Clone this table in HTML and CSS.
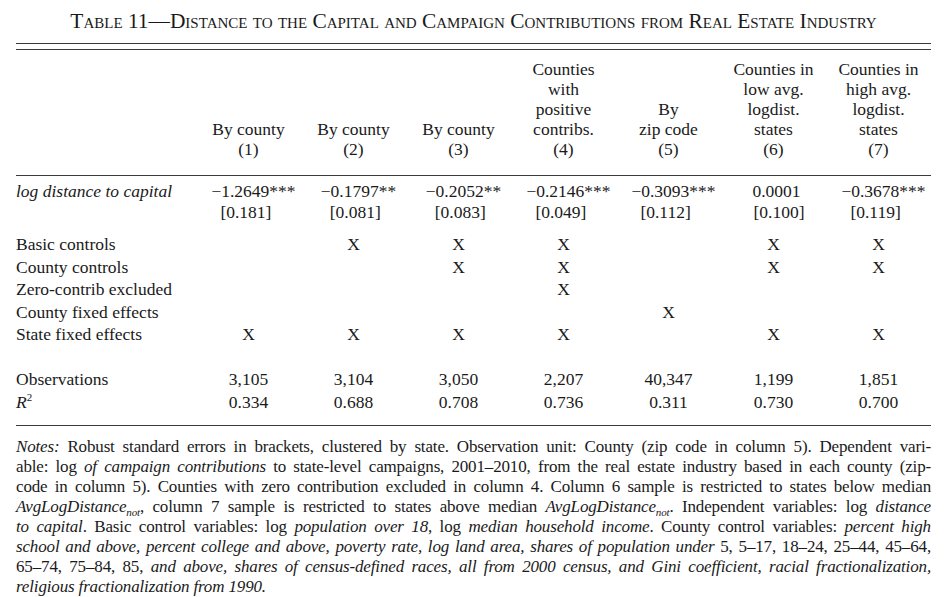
FILE: index.html
```html
<!DOCTYPE html>
<html lang="en">
<head>
<meta charset="utf-8">
<title>Table 11</title>
<link rel="stylesheet" href="styles.css">
</head>
<body>
<div class="page">
  <h1 class="title">Table 11—Distance to the Capital and Campaign Contributions from Real Estate Industry</h1>
  <div class="double-rule"></div>
  <table class="reg">
    <colgroup>
      <col class="col-label">
      <col class="col-data"><col class="col-data"><col class="col-data"><col class="col-data"><col class="col-data"><col class="col-data"><col class="col-data">
    </colgroup>
    <thead>
      <tr>
        <th class="h-label"></th>
        <th>By county<br>(1)</th>
        <th>By county<br>(2)</th>
        <th>By county<br>(3)</th>
        <th>Counties<br>with<br>positive<br>contribs.<br>(4)</th>
        <th>By<br>zip code<br>(5)</th>
        <th>Counties in<br>low avg.<br>logdist.<br>states<br>(6)</th>
        <th>Counties in<br>high avg.<br>logdist.<br>states<br>(7)</th>
      </tr>
    </thead>
    <tbody>
      <tr class="coef-row">
        <td class="label"><i>log distance to capital</i></td>
        <td><span class="stack"><span class="cf">−1.2649***</span><span class="se">[0.181]</span></span></td>
        <td><span class="stack"><span class="cf">−0.1797**</span><span class="se">[0.081]</span></span></td>
        <td><span class="stack"><span class="cf">−0.2052**</span><span class="se">[0.083]</span></span></td>
        <td><span class="stack"><span class="cf">−0.2146***</span><span class="se">[0.049]</span></span></td>
        <td><span class="stack"><span class="cf">−0.3093***</span><span class="se">[0.112]</span></span></td>
        <td><span class="stack"><span class="cf">0.0001</span><span class="se se-flat">[0.100]</span></span></td>
        <td><span class="stack"><span class="cf">−0.3678***</span><span class="se">[0.119]</span></span></td>
      </tr>
      <tr class="x-row first-x">
        <td class="label">Basic controls</td>
        <td></td><td>X</td><td>X</td><td>X</td><td></td><td>X</td><td>X</td>
      </tr>
      <tr class="x-row">
        <td class="label">County controls</td>
        <td></td><td></td><td>X</td><td>X</td><td></td><td>X</td><td>X</td>
      </tr>
      <tr class="x-row">
        <td class="label">Zero-contrib excluded</td>
        <td></td><td></td><td></td><td>X</td><td></td><td></td><td></td>
      </tr>
      <tr class="x-row">
        <td class="label">County fixed effects</td>
        <td></td><td></td><td></td><td></td><td>X</td><td></td><td></td>
      </tr>
      <tr class="x-row">
        <td class="label">State fixed effects</td>
        <td>X</td><td>X</td><td>X</td><td>X</td><td></td><td>X</td><td>X</td>
      </tr>
      <tr class="x-row obs-row">
        <td class="label">Observations</td>
        <td>3,105</td><td>3,104</td><td>3,050</td><td>2,207</td><td>40,347</td><td>1,199</td><td>1,851</td>
      </tr>
      <tr class="x-row last-row">
        <td class="label"><i>R</i><sup>2</sup></td>
        <td>0.334</td><td>0.688</td><td>0.708</td><td>0.736</td><td>0.311</td><td>0.730</td><td>0.700</td>
      </tr>
    </tbody>
  </table>
  <div class="notes">
    <span class="ln"><i>Notes:</i> Robust standard errors in brackets, clustered by state. Observation unit: County (zip code in column 5). Dependent vari-</span>
    <span class="ln">able: log <i>of campaign contributions</i> to state-level campaigns, 2001–2010, from the real estate industry based in each county (zip-</span>
    <span class="ln">code in column 5). Counties with zero contribution excluded in column 4. Column 6 sample is restricted to states below median</span>
    <span class="ln"><i>AvgLogDistance<sub>not</sub></i>, column 7 sample is restricted to states above median <i>AvgLogDistance<sub>not</sub></i>. Independent variables: log <i>distance</i></span>
    <span class="ln"><i>to capital</i>. Basic control variables: log <i>population over 18</i>, log <i>median household income</i>. County control variables: <i>percent high</i></span>
    <span class="ln"><i>school and above, percent college and above, poverty rate, log land area, shares of population under</i> 5, 5–17, 18–24, 25–44, 45–64,</span>
    <span class="ln">65–74, 75–84, 85, <i>and above, shares of census-defined races, all from 2000 census, and Gini coefficient, racial fractionalization,</i></span>
    <span class="ln ln-last"><i>religious fractionalization from 1990.</i></span>
  </div>
</div>
</body>
</html>
```

FILE: styles.css
```css
html, body {
  margin: 0;
  padding: 0;
  background: #ffffff;
}

body {
  font-family: "Liberation Serif", "Times New Roman", serif;
  color: #1a1a1a;
  font-size: 17.5px;
}

.page {
  width: 915px;
  padding: 10px 0 0 16px;
}

.title {
  margin: 0 0 11px 0;
  font-size: 21.4px;
  font-weight: normal;
  font-variant: small-caps;
  line-height: 22px;
  text-align: center;
}

.double-rule {
  height: 5px;
  border-top: 1px solid #3a3a3a;
  border-bottom: 1px solid #3a3a3a;
}

.reg {
  width: 915px;
  table-layout: fixed;
  border-collapse: collapse;
  border-spacing: 0;
}

.col-label { width: 180px; }
.col-data { width: 105px; }

.reg th {
  font-weight: normal;
  text-align: center;
  vertical-align: bottom;
  line-height: 20px;
  padding: 9px 0 16px 0;
  border-bottom: 1px solid #3a3a3a;
}

.reg td {
  padding: 0;
  text-align: center;
  vertical-align: top;
  white-space: nowrap;
}

.reg td.label {
  text-align: left;
}

.coef-row td {
  line-height: 21px;
  padding-top: 5px;
  padding-bottom: 10px;
}

.stack {
  display: inline-block;
  text-align: left;
  padding-left: 10px;
}

.cf, .se {
  display: block;
}

.se {
  padding-left: 9px;
}

.se-flat {
  padding-left: 1px;
}

.x-row td {
  line-height: 22.5px;
}

.obs-row td {
  padding-top: 22.5px;
}

.last-row td {
  padding-bottom: 12px;
  border-bottom: 1px solid #3a3a3a;
}

sup {
  font-size: 11px;
  line-height: 0;
  vertical-align: 7px;
}

.notes {
  margin-top: 11px;
  line-height: 20px;
  font-size: 17px;
  letter-spacing: -0.15px;
}

.notes .ln {
  display: block;
  text-align: justify;
  text-align-last: justify;
  white-space: nowrap;
}

.notes .ln-last {
  text-align-last: left;
}

.notes sub {
  font-size: 11px;
  line-height: 0;
  vertical-align: -4px;
}
```
